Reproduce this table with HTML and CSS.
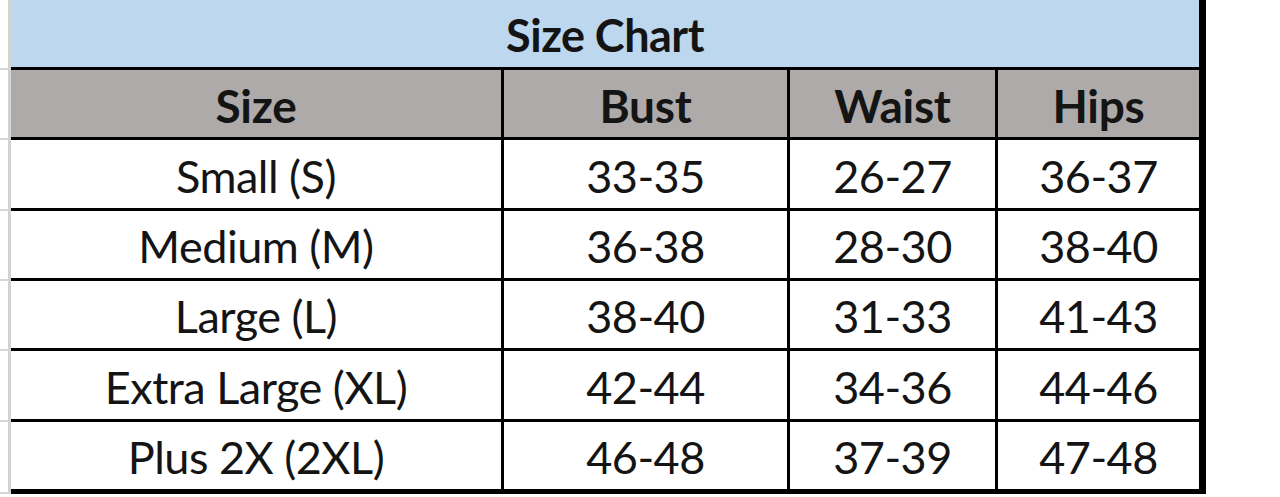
FILE: index.html
```html
<!DOCTYPE html>
<html lang="en">
<head>
<meta charset="utf-8">
<title>Size Chart</title>
<link rel="stylesheet" href="styles.css">
</head>
<body>
<div class="sheet">
  <div class="chart">
    <div class="stub"></div>
    <div class="cell title">Size Chart</div>

    <div class="stub"></div>
    <div class="cell head">Size</div>
    <div class="cell head">Bust</div>
    <div class="cell head">Waist</div>
    <div class="cell head last-col">Hips</div>

    <div class="stub"></div>
    <div class="cell">Small (S)</div>
    <div class="cell">33-35</div>
    <div class="cell">26-27</div>
    <div class="cell last-col">36-37</div>

    <div class="stub"></div>
    <div class="cell">Medium (M)</div>
    <div class="cell">36-38</div>
    <div class="cell">28-30</div>
    <div class="cell last-col">38-40</div>

    <div class="stub"></div>
    <div class="cell">Large (L)</div>
    <div class="cell">38-40</div>
    <div class="cell">31-33</div>
    <div class="cell last-col">41-43</div>

    <div class="stub"></div>
    <div class="cell">Extra Large (XL)</div>
    <div class="cell">42-44</div>
    <div class="cell">34-36</div>
    <div class="cell last-col">44-46</div>

    <div class="stub"></div>
    <div class="cell last-row">Plus 2X (2XL)</div>
    <div class="cell last-row">46-48</div>
    <div class="cell last-row">37-39</div>
    <div class="cell last-row last-col">47-48</div>
  </div>
</div>
</body>
</html>
```

FILE: styles.css
```css
* { box-sizing: border-box; }

html, body {
  margin: 0;
  padding: 0;
  background: #ffffff;
}

.sheet {
  width: 1280px;
  height: 497px;
  overflow: hidden;
  font-family: Lato, "Open Sans", "Liberation Sans", sans-serif;
  color: #141414;
}

.chart {
  display: grid;
  grid-template-columns: 11px 493px 286px 208px 208px;
  grid-template-rows: 70px 70px 71px 70px 70px 71px 72px;
}

.stub {
  border-right: 3px solid #d2d2d2;
  border-bottom: 2px solid #d6d6d6;
}

.cell {
  display: flex;
  align-items: center;
  justify-content: center;
  padding-top: 4px;
  font-size: 45px;
  letter-spacing: -0.5px;
  line-height: 1;
  white-space: nowrap;
  background: #ffffff;
  border-right: 3px solid #000;
  border-bottom: 3px solid #000;
}

.title {
  grid-column: 2 / 6;
  background: #bdd7ee;
  font-size: 45px;
  font-weight: 700;
  border-right: 7px solid #000;
}

.head {
  background: #aeaaaa;
  font-size: 46px;
  letter-spacing: -0.3px;
  font-weight: 700;
}

.last-col {
  border-right: 7px solid #000;
}

.last-row {
  border-bottom: 5px solid #000;
}
```
